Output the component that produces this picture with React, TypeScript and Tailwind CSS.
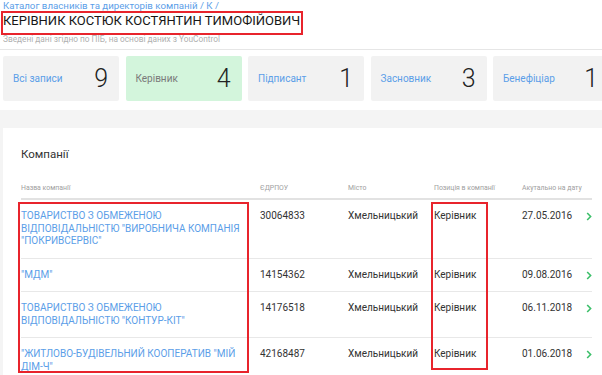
import React from "react";

const stats = [
  { label: "Всі записи", value: "9", active: false },
  { label: "Керівник", value: "4", active: true },
  { label: "Підписант", value: "1", active: false },
  { label: "Засновник", value: "3", active: false },
  { label: "Бенефіціар", value: "1", active: false },
];

const rows = [
  {
    name: 'ТОВАРИСТВО З ОБМЕЖЕНОЮ ВІДПОВІДАЛЬНІСТЮ "ВИРОБНИЧА КОМПАНІЯ "ПОКРИВСЕРВІС"',
    code: "30064833",
    date: "27.05.2016",
  },
  { name: '"МДМ"', code: "14154362", date: "09.08.2016" },
  {
    name: 'ТОВАРИСТВО З ОБМЕЖЕНОЮ ВІДПОВІДАЛЬНІСТЮ "КОНТУР-КІТ"',
    code: "14176518",
    date: "06.11.2018",
  },
  {
    name: '"ЖИТЛОВО-БУДІВЕЛЬНИЙ КООПЕРАТИВ "МІЙ ДІМ-Ч"',
    code: "42168487",
    date: "01.06.2018",
  },
];

function Chevron() {
  return (
    <svg width="6" height="9" viewBox="0 0 6 9" className="block">
      <path d="M1.2 1 L4.6 4.5 L1.2 8" fill="none" stroke="#3cbf6a" strokeWidth="1.6" />
    </svg>
  );
}

export default function App() {
  return (
    <div className="relative w-[602px] h-[375px] overflow-hidden bg-[#f4f4f4] font-['Roboto','Liberation_Sans',sans-serif]">
      {/* header */}
      <header className="h-[50px] bg-white border-b border-[#e6e6e6] px-[3px]">
        <div className="text-[9.7px] leading-[11px] text-[#5b9ee8] whitespace-nowrap">
          Каталог власників та директорів компаній / К /
        </div>
        <h1 className="text-[13px] leading-[20px] text-[#161616] whitespace-nowrap">
          КЕРІВНИК КОСТЮК КОСТЯНТИН ТИМОФІЙОВИЧ
        </h1>
        <div className="mt-[3px] text-[8.3px] leading-[11px] text-[#b0b0b0] whitespace-nowrap">
          Зведені дані згідно по ПІБ, на основі даних з YouControl
        </div>
      </header>

      {/* stats */}
      <section className="bg-white pt-[6px] pb-[9px] px-[3px]">
        <div className="flex gap-[6.5px]">
          {stats.map((s) => (
            <div
              key={s.label}
              className={
                "shrink-0 w-[116px] h-[45px] rounded-[2px] flex items-center justify-between pl-[10px] pr-[11px] " +
                (s.active ? "bg-[#d3f5dc]" : "bg-[#f2f2f2]")
              }
            >
              <span
                className={
                  "text-[10px] " + (s.active ? "text-[#7a7a7a]" : "text-[#5b9ee8]")
                }
              >
                {s.label}
              </span>
              <span className="text-[25px] leading-none font-light text-[#222]">{s.value}</span>
            </div>
          ))}
        </div>
      </section>

      {/* companies card */}
      <section className="mt-[18px] ml-[3px] bg-white pl-[18px] pr-[10px] pt-[18px] pb-[20px]">
        <h2 className="text-[11.5px] leading-[16px] text-[#333]">Компанії</h2>
        <table className="mt-[21px] table-fixed border-collapse w-[571px]">
          <colgroup>
            <col className="w-[239px]" />
            <col className="w-[88px]" />
            <col className="w-[86px]" />
            <col className="w-[88px]" />
            <col className="w-[58px]" />
            <col className="w-[12px]" />
          </colgroup>
          <thead>
            <tr className="border-b-2 border-[#e2e2e2]">
              <th className="text-left font-normal text-[6.9px] leading-[10px] text-[#a0a0a0] pb-[5px]">
                Назва компанії
              </th>
              <th className="text-left font-normal text-[6.9px] leading-[10px] text-[#a0a0a0] pb-[5px]">
                ЄДРПОУ
              </th>
              <th className="text-left font-normal text-[6.9px] leading-[10px] text-[#a0a0a0] pb-[5px]">
                Місто
              </th>
              <th className="text-left font-normal text-[6.9px] leading-[10px] text-[#a0a0a0] pb-[5px]">
                Позиція в компанії
              </th>
              <th className="text-left font-normal text-[6.9px] leading-[10px] text-[#a0a0a0] pb-[5px] whitespace-nowrap">
                Акутально на дату
              </th>
              <th />
            </tr>
          </thead>
          <tbody>
            {rows.map((r) => (
              <tr key={r.code} className="border-b border-[#e8e8e8] align-top">
                <td className="py-[10px] pr-[14px] text-[10px] leading-[12.5px] text-[#5b9ee8]">
                  {r.name}
                </td>
                <td className="py-[10px] text-[10px] leading-[12.5px] text-[#333]">{r.code}</td>
                <td className="py-[10px] text-[10px] leading-[12.5px] text-[#333]">Хмельницький</td>
                <td className="py-[10px] text-[10px] leading-[12.5px] text-[#333]">Керівник</td>
                <td className="py-[10px] text-[10px] leading-[12.5px] text-[#333]">{r.date}</td>
                <td className="pt-[12px] pl-[6px]">
                  <Chevron />
                </td>
              </tr>
            ))}
          </tbody>
        </table>
      </section>

      {/* annotation boxes */}
      <div className="absolute left-[1px] top-[11px] w-[302px] h-[24px] border-2 border-[#e8242c]" />
      <div className="absolute left-[18px] top-[202px] w-[231px] h-[171px] border-2 border-[#e8242c]" />
      <div className="absolute left-[431px] top-[202px] w-[57px] h-[168px] border-2 border-[#e8242c]" />
    </div>
  );
}
